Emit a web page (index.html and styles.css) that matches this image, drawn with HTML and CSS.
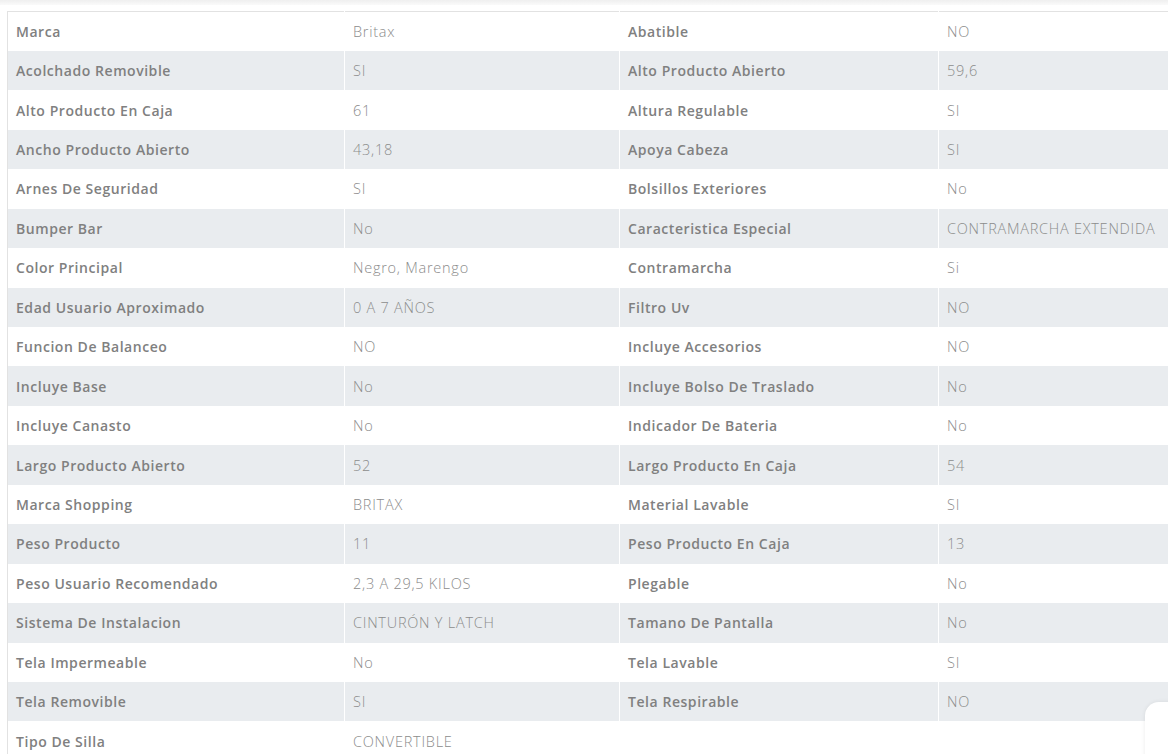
FILE: index.html
```html
<!DOCTYPE html>
<html lang="es">
<head>
<meta charset="utf-8">
<title>Especificaciones</title>
<link rel="stylesheet" href="styles.css">
</head>
<body>
<div class="topbar"></div>
<div class="wrap">
<table class="specs">
<colgroup><col class="c1"><col class="c2"><col class="c3"><col class="c4"></colgroup>
<tbody>
<tr><th>Marca</th><td>Britax</td><th>Abatible</th><td>NO</td></tr>
<tr><th>Acolchado Removible</th><td>SI</td><th>Alto Producto Abierto</th><td>59,6</td></tr>
<tr><th>Alto Producto En Caja</th><td>61</td><th>Altura Regulable</th><td>SI</td></tr>
<tr><th>Ancho Producto Abierto</th><td>43,18</td><th>Apoya Cabeza</th><td>SI</td></tr>
<tr><th>Arnes De Seguridad</th><td>SI</td><th>Bolsillos Exteriores</th><td>No</td></tr>
<tr><th>Bumper Bar</th><td>No</td><th>Caracteristica Especial</th><td>CONTRAMARCHA EXTENDIDA</td></tr>
<tr><th>Color Principal</th><td>Negro, Marengo</td><th>Contramarcha</th><td>Si</td></tr>
<tr><th>Edad Usuario Aproximado</th><td>0 A 7 AÑOS</td><th>Filtro Uv</th><td>NO</td></tr>
<tr><th>Funcion De Balanceo</th><td>NO</td><th>Incluye Accesorios</th><td>NO</td></tr>
<tr><th>Incluye Base</th><td>No</td><th>Incluye Bolso De Traslado</th><td>No</td></tr>
<tr><th>Incluye Canasto</th><td>No</td><th>Indicador De Bateria</th><td>No</td></tr>
<tr><th>Largo Producto Abierto</th><td>52</td><th>Largo Producto En Caja</th><td>54</td></tr>
<tr><th>Marca Shopping</th><td>BRITAX</td><th>Material Lavable</th><td>SI</td></tr>
<tr><th>Peso Producto</th><td>11</td><th>Peso Producto En Caja</th><td>13</td></tr>
<tr><th>Peso Usuario Recomendado</th><td>2,3 A 29,5 KILOS</td><th>Plegable</th><td>No</td></tr>
<tr><th>Sistema De Instalacion</th><td>CINTURÓN Y LATCH</td><th>Tamano De Pantalla</th><td>No</td></tr>
<tr><th>Tela Impermeable</th><td>No</td><th>Tela Lavable</th><td>SI</td></tr>
<tr><th>Tela Removible</th><td>SI</td><th>Tela Respirable</th><td>NO</td></tr>
<tr><th>Tipo De Silla</th><td>CONVERTIBLE</td><td class="empty"></td><td class="empty"></td></tr>
</tbody>
</table>
</div>
<div class="chat"></div>
</body>
</html>
```
FILE: styles.css
```css
html, body {
  margin: 0;
  padding: 0;
  background: #fff;
  overflow: hidden;
  width: 1168px;
  height: 754px;
}
body {
  font-family: "Open Sans", "Liberation Sans", sans-serif;
  font-size: 14px;
}
.topbar {
  height: 5px;
  background: linear-gradient(#efefef, #fafafa);
}
.wrap {
  padding: 6px 0 0 7px;
}
.specs {
  border-collapse: collapse;
  table-layout: fixed;
  width: 1300px;
  border-top: 1px solid #e2e2e2;
  border-left: 1px solid #e2e2e2;
}
.c1 { width: 337px; }
.c2 { width: 275px; }
.c3 { width: 319px; }
.c4 { width: 369px; }
.specs th, .specs td {
  height: 39.44px;
  padding: 0 8px;
  text-align: left;
  vertical-align: middle;
  white-space: nowrap;
  border-left: 1px solid #fff;
  box-sizing: border-box;
}
.specs tr > :first-child { border-left: 0; }
.specs th {
  font-weight: 600;
  color: #808080;
  letter-spacing: 0.55px;
}
.specs td {
  font-weight: 300;
  font-size: 14.5px;
  color: #8c8c8c;
  letter-spacing: 0.75px;
}
.specs tr:nth-child(even) { background: #e9ecef; }
.chat {
  position: fixed;
  left: 1145px;
  top: 702px;
  width: 80px;
  height: 80px;
  background: #fff;
  border-radius: 14px;
  box-shadow: 0 0 4px rgba(0,0,0,0.08);
}
```
